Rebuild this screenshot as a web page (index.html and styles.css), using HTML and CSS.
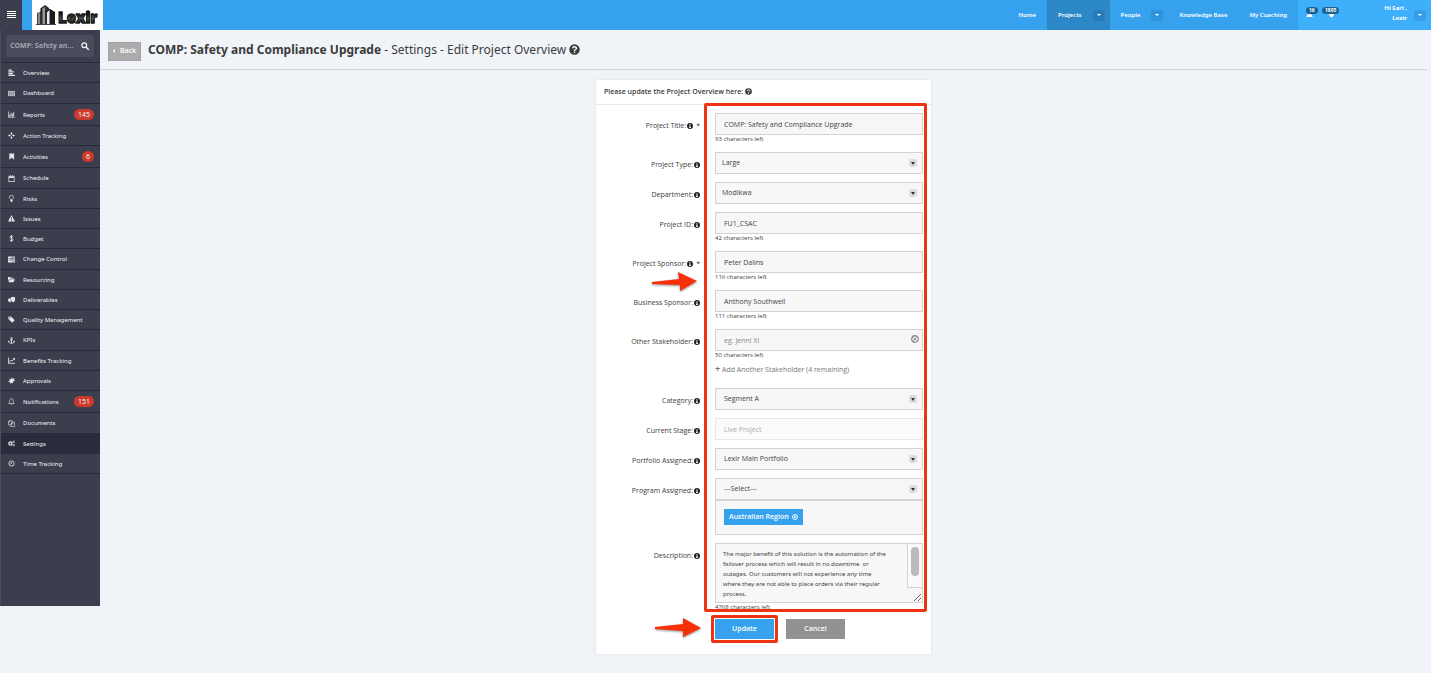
FILE: index.html
```html
<!DOCTYPE html>
<html lang="en">
<head>
<meta charset="utf-8">
<title>Edit Project Overview</title>
<link rel="stylesheet" href="styles.css">
</head>
<body>
<svg class="sprite" aria-hidden="true">
  <symbol id="search" viewBox="0 0 16 16"><circle cx="6.5" cy="6.5" r="4.8" fill="none" stroke="currentColor" stroke-width="2.4"/><path d="M10 10l5 5" stroke="currentColor" stroke-width="3" stroke-linecap="round"/></symbol>
  <symbol id="lines" viewBox="0 0 16 16"><path d="M1 1h8v3H1zM1 5h12v3H1zM1 9h10v3H1zM1 13h15v3H1z"/></symbol>
  <symbol id="board" viewBox="0 0 16 16"><path d="M0 2h16v12H0z" opacity=".75"/><path d="M2 5h12M2 8h12M2 11h12" stroke="#3b3e4d" stroke-dasharray="3 1.500"/></symbol>
  <symbol id="bars" viewBox="0 0 16 16"><path d="M0 1h1.500v12.500H16V15H0zM3 8h2v5H3zM6 4h2v9H6zM9 6h2v7H9zM12 2h2v11h-2z"/></symbol>
  <symbol id="cross" viewBox="0 0 16 16"><path d="M8 0l3 4H9v3h3V5l4 3-4 3V9H9v3h2l-3 4-3-4h2V9H4v2L0 8l4-3v2h3V4H5z" /><circle cx="8" cy="8" r="2" fill="#3b3e4d"/></symbol>
  <symbol id="bookmark" viewBox="0 0 16 16"><path d="M3 1h11v14.500L8.500 11 3 15.500z"/></symbol>
  <symbol id="calendar" viewBox="0 0 16 16"><path fill-rule="evenodd" d="M1 3h3V0h2v3h4V0h2v3h3v13H1zM2.500 7v7.500h11V7z"/></symbol>
  <symbol id="bulb" viewBox="0 0 16 16"><path d="M6 10.500C6 8.500 3.500 8 3.500 5a4.500 4.500 0 0 1 9 0c0 3-2.500 3.500-2.500 5.500z" fill="none" stroke="currentColor" stroke-width="1.600"/><path d="M5.500 11.500h5V15L8 16l-2.500-1z"/></symbol>
  <symbol id="warn" viewBox="0 0 16 16"><path fill-rule="evenodd" d="M8 0l8 15H0zM7 5l.4 5h1.200L9 5zM7 11.500v2h2v-2z"/></symbol>
  <symbol id="dollar" viewBox="0 0 16 16"><path d="M11.500 4.800C11 3.200 9.800 2.600 8 2.600c-4.500 0-4.500 4.500 0 5.200 5 .8 4.500 5.600 0 5.600-2.200 0-3.500-.9-3.800-2.600M8 0v16" fill="none" stroke="currentColor" stroke-width="2"/></symbol>
  <symbol id="stack" viewBox="0 0 16 16"><path fill-rule="evenodd" d="M0 1h16v4H0zM0 6h16v4H0zM0 11h16v4H0zM8 2.400v1.200h6.500V2.400zM4 7.400v1.200h10.500V7.400zM10 12.400v1.200h4.500v-1.200z"/></symbol>
  <symbol id="folder" viewBox="0 0 16 16"><path d="M0 12V2h5l1.500 2H12v2.500H4zM4.500 7.500H16L12.500 14H1z"/></symbol>
  <symbol id="truck" viewBox="0 0 16 16"><path d="M7 2h9v10H7zM3 5h3.500v7H0V8z"/><circle cx="4" cy="12.500" r="2"/><circle cx="12" cy="12.500" r="2"/></symbol>
  <symbol id="tag" viewBox="0 0 16 16"><path fill-rule="evenodd" d="M1 1h6l8.500 8.500-6 6L1 7zM4 2.800a1.200 1.200 0 1 0 .1 0z"/></symbol>
  <symbol id="anchor" viewBox="0 0 16 16"><g fill="none" stroke="currentColor" stroke-width="2"><circle cx="8" cy="2.800" r="1.800"/><path d="M8 5v9.500M4.500 7h7M1.500 10c.5 3 3 4.500 6.500 4.500s6-1.500 6.500-4.500"/></g><path d="M0 12l1-4 3.500 3zM16 12l-1-4-3.500 3z"/></symbol>
  <symbol id="trend" viewBox="0 0 16 16"><path d="M1 1v13.500h15M3 11l3.500-4 2.500 2.500L14 4" fill="none" stroke="currentColor" stroke-width="2"/><path d="M10.500 2H16v5.500z"/></symbol>
  <symbol id="pin" viewBox="0 0 16 16"><path d="M9 0l1 4 5-1-1 4 2 1-4 2-1 4-3-1-2 3-1-4-5-1 4-3-1-4 4 1z"/></symbol>
  <symbol id="bell" viewBox="0 0 16 16"><path d="M8 1.500C4.500 2 4 5 4 7.500S3 11 1.500 12.500h13C13 11 12 10 12 7.500S11.500 2 8 1.500zM8 0v2M6.500 14.500h3" fill="none" stroke="currentColor" stroke-width="1.500"/></symbol>
  <symbol id="copy" viewBox="0 0 16 16"><path d="M4 1h5v10H1V4zM4 1v3H1M9.500 5H15v10H6v-3M9.500 5v3H6" fill="none" stroke="currentColor" stroke-width="1.500"/></symbol>
  <symbol id="cogs" viewBox="0 0 16 16"><circle cx="5.500" cy="8" r="3.300" fill="none" stroke="currentColor" stroke-width="2.600"/><circle cx="5.500" cy="8" r="5" fill="none" stroke="currentColor" stroke-width="1.400" stroke-dasharray="2 1.930"/><circle cx="13" cy="4" r="1.800" fill="none" stroke="currentColor" stroke-width="1.800"/><circle cx="13" cy="12" r="1.800" fill="none" stroke="currentColor" stroke-width="1.800"/></symbol>
  <symbol id="clock" viewBox="0 0 16 16"><circle cx="8" cy="8" r="6" fill="none" stroke="currentColor" stroke-width="2"/><path d="M8 4.500v4H5" fill="none" stroke="currentColor" stroke-width="1.600"/></symbol>
  <symbol id="info" viewBox="0 0 16 16"><circle cx="8" cy="8" r="8"/><path d="M6.500 3h3v2h-3zM5.500 6.500h4v5h1V13h-5v-1.500h1V8h-1z" fill="#fff"/></symbol>
  <symbol id="help" viewBox="0 0 16 16"><circle cx="8" cy="8" r="7.600"/><path d="M5.200 6.200C5.500 4.500 6.500 4 8 4c3.300 0 3.600 3 1.500 4C8.400 8.600 8 9 8 10" fill="none" stroke="#fff" stroke-width="2"/><path d="M7 11h2v2H7z" fill="#fff"/></symbol>
  <symbol id="clear" viewBox="0 0 16 16"><circle cx="8" cy="8" r="6.500" fill="none" stroke="currentColor" stroke-width="2.600"/><path d="M5 5l6 6M11 5l-6 6" stroke="currentColor" stroke-width="2"/></symbol>
  <symbol id="user" viewBox="0 0 16 16"><circle cx="8" cy="4" r="3.500"/><path d="M1 15c0-5 3-7 7-7s7 2 7 7z"/></symbol>
  <symbol id="bubble" viewBox="0 0 16 16"><path d="M2 1h12v7c0 4-3 5-6 8-3-3-6-4-6-8z"/></symbol>
</svg>

<header class="topbar">
  <button class="menu-toggle" aria-label="Menu"><span></span><span></span><span></span><span></span></button>
  <a class="logo" href="#">
    <svg viewBox="0 0 22 22" aria-hidden="true">
      <defs><linearGradient id="steel" x1="0" x2="1"><stop offset="0" stop-color="#222"/><stop offset=".5" stop-color="#aaa"/><stop offset="1" stop-color="#222"/></linearGradient></defs>
      <path d="M1 9l4-2v13H1z" fill="url(#steel)"/><path d="M5 4l4-3 4 3v16H5z" fill="#2c2c2c"/><path d="M6.500 4.500L9 3v17H6.500z" fill="#999"/>
      <path d="M11 8l3-3v15h-3z" fill="#eee"/><path d="M14 5l5 3v12h-5z" fill="#1c1c1c"/><path d="M10.500 8.500L14 5v15M5 4v16" fill="none" stroke="#222"/><path d="M0 20.500h20" stroke="#444"/>
    </svg>
    <span>Lexir</span>
  </a>
  <nav class="main-nav">
    <a href="#">Home</a>
    <div class="split current"><a href="#">Projects</a><button class="drop" aria-label="Projects menu"></button></div>
    <div class="split"><a href="#">People</a><button class="drop" aria-label="People menu"></button></div>
    <a href="#">Knowledge Base</a>
    <a href="#">My Coaching</a>
  </nav>
  <div class="account">
    <a class="alert" href="#" aria-label="Team alerts"><svg><use href="#user"/></svg><span class="count">16</span></a>
    <a class="alert" href="#" aria-label="Messages"><svg><use href="#bubble"/></svg><span class="count">1895</span></a>
    <p class="hello">Hi Earl ,<br>Lexir</p>
    <button class="drop" aria-label="Account menu"></button>
  </div>
</header>

<div class="layout">
  <aside class="sidebar">
    <div class="finder"><input type="text" aria-label="Find project" placeholder="COMP: Safety an..."><button aria-label="Search"><svg><use href="#search"/></svg></button></div>
    <ul class="side-nav">
      <li><a href="#"><svg><use href="#lines"/></svg>Overview</a></li>
      <li><a href="#"><svg><use href="#board"/></svg>Dashboard</a></li>
      <li class="counted"><a href="#"><svg><use href="#bars"/></svg>Reports<span class="pill">145</span></a></li>
      <li><a href="#"><svg><use href="#cross"/></svg>Action Tracking</a></li>
      <li class="counted"><a href="#"><svg><use href="#bookmark"/></svg>Activities<span class="pill">6</span></a></li>
      <li><a href="#"><svg><use href="#calendar"/></svg>Schedule</a></li>
      <li><a href="#"><svg><use href="#bulb"/></svg>Risks</a></li>
      <li><a href="#"><svg><use href="#warn"/></svg>Issues</a></li>
      <li><a href="#"><svg><use href="#dollar"/></svg>Budget</a></li>
      <li><a href="#"><svg><use href="#stack"/></svg>Change Control</a></li>
      <li><a href="#"><svg><use href="#folder"/></svg>Resourcing</a></li>
      <li><a href="#"><svg><use href="#truck"/></svg>Deliverables</a></li>
      <li><a href="#"><svg><use href="#tag"/></svg>Quality Management</a></li>
      <li><a href="#"><svg><use href="#anchor"/></svg>KPIs</a></li>
      <li><a href="#"><svg><use href="#trend"/></svg>Benefits Tracking</a></li>
      <li><a href="#"><svg><use href="#pin"/></svg>Approvals</a></li>
      <li class="counted"><a href="#"><svg><use href="#bell"/></svg>Notifications<span class="pill">151</span></a></li>
      <li><a href="#"><svg><use href="#copy"/></svg>Documents</a></li>
      <li class="current"><a href="#"><svg><use href="#cogs"/></svg>Settings</a></li>
      <li><a href="#"><svg><use href="#clock"/></svg>Time Tracking</a></li>
    </ul>
  </aside>

  <main>
    <div class="page-head">
      <button class="back"><i></i>Back</button>
      <h1><b>COMP: Safety and Compliance Upgrade</b> - Settings - Edit Project Overview <svg><use href="#help"/></svg></h1>
    </div>

    <form class="card">
      <h2>Please update the Project Overview here: <svg><use href="#help"/></svg></h2>
      <div class="fields">
        <div class="row"><label for="title">Project Title: <svg><use href="#info"/></svg> <span class="req">*</span></label>
          <div><input class="control" id="title" type="text" value="COMP: Safety and Compliance Upgrade"><p class="left">93 characters left</p></div></div>
        <div class="row"><label for="type">Project Type: <svg><use href="#info"/></svg></label>
          <div class="pick"><select class="control tight" id="type"><option>Large</option></select></div></div>
        <div class="row"><label for="dept">Department: <svg><use href="#info"/></svg></label>
          <div class="pick"><select class="control tight" id="dept"><option>Modikwa</option></select></div></div>
        <div class="row"><label for="pid">Project ID: <svg><use href="#info"/></svg></label>
          <div><input class="control" id="pid" type="text" value="FU1_CSAC"><p class="left">42 characters left</p></div></div>
        <div class="row"><label for="sponsor">Project Sponsor: <svg><use href="#info"/></svg> <span class="req">*</span></label>
          <div><input class="control" id="sponsor" type="text" value="Peter Dalins"><p class="left">116 characters left</p></div>
          <svg class="arrow" viewBox="0 0 48 22"><path d="M1 11L28 8 27 1 46 10 29 20V14L1 13z"/></svg></div>
        <div class="row"><label for="business">Business Sponsor: <svg><use href="#info"/></svg></label>
          <div><input class="control" id="business" type="text" value="Anthony Southwell"><p class="left">111 characters left</p></div></div>
        <div class="row"><label for="other">Other Stakeholder: <svg><use href="#info"/></svg></label>
          <div class="clearable"><input class="control" id="other" type="text" placeholder="eg. Jenni Xi"><button type="button" class="clear" aria-label="Clear"><svg><use href="#clear"/></svg></button>
            <p class="left">50 characters left</p><a class="add" href="#"><b>+</b> Add Another Stakeholder (4 remaining)</a></div></div>
        <div class="row"><label for="category">Category: <svg><use href="#info"/></svg></label>
          <div class="pick"><select class="control" id="category"><option>Segment A</option></select></div></div>
        <div class="row"><label for="stage">Current Stage: <svg><use href="#info"/></svg></label>
          <div><input class="control" id="stage" type="text" value="Live Project" disabled></div></div>
        <div class="row"><label for="portfolio">Portfolio Assigned: <svg><use href="#info"/></svg></label>
          <div class="pick"><select class="control" id="portfolio"><option>Lexir Main Portfolio</option></select></div></div>
        <div class="row"><label for="program">Program Assigned: <svg><use href="#info"/></svg></label>
          <div class="pick"><select class="control" id="program"><option>---Select---</option></select>
            <div class="chosen"><button type="button" class="chip">Australian Region <svg><use href="#clear"/></svg></button></div></div></div>
        <div class="row"><label for="desc">Description: <svg><use href="#info"/></svg></label>
          <div><div class="scroller"><textarea class="control" id="desc">The major benefit of this solution is the automation of the
failover process which will result in no downtime  or
outages. Our customers will not experience any time
where they are not able to place orders via their regular
process.</textarea><div class="track"><span></span></div></div><p class="left">4768 characters left</p></div></div>
        <div class="mark"></div>
      </div>
      <div class="actions">
        <svg class="arrow" viewBox="0 0 48 22"><path d="M1 10L29 7V1L47 11 29 20V14L1 12z"/></svg>
        <div class="marked"><button type="submit" class="btn primary">Update</button></div>
        <button type="button" class="btn">Cancel</button>
      </div>
    </form>
  </main>
</div>
</body>
</html>
```
FILE: styles.css
```css
* { box-sizing: border-box; }
body {
  margin: 0;
  background: #f0f4f8;
  color: #3c3c3c;
  font: 7px/10px "Open Sans", "Noto Sans", sans-serif;
}
h1, h2, p, ul { margin: 0; padding: 0; }
a { color: inherit; text-decoration: none; }
button { margin: 0; padding: 0; border: 0; font: inherit; color: inherit; background: none; cursor: pointer; }
svg { fill: currentColor; }
.sprite { display: none; }

/* Top bar */
.topbar { display: flex; height: 30px; background: #36a2ee; color: #fff; font: 600 6px/10px "Noto Sans", sans-serif; }
.menu-toggle { display: flex; flex-direction: column; justify-content: center; align-items: center; gap: 1px; width: 22px; padding-bottom: 2px; background: #3b3e4d; }
.menu-toggle span { width: 9px; height: 1px; background: #fff; }
.logo { display: flex; align-items: center; width: 71px; margin-left: 10px; padding-left: 4px; background: #fff; }
.logo svg { flex: none; width: 22px; height: 22px; }
.logo span {
  padding-top: 4px;
  background: linear-gradient(#000 40%, #555 65%, #000 90%);
  background-clip: text;
  color: transparent;
  font: 800 15px/20px "Open Sans", sans-serif;
  -webkit-text-stroke: 1px #1a1a1a;
}
.main-nav { display: flex; align-items: center; margin-left: auto; }
.main-nav > a { padding: 0 11px; }
.split { display: flex; align-items: center; height: 100%; gap: 11px; padding: 0 5px 0 11px; }
.split.current { background: #2d88c8; }
.drop { display: grid; place-items: center; width: 12px; height: 11px; border-radius: 2px; background: rgb(0 40 80 / 12%); }
.drop::before { content: ""; border: 2px solid transparent; border-top-color: #fff; border-bottom: 0; }
.account { display: flex; align-items: center; width: 133px; padding: 0 5px 0 8px; background: #3eb0fb; }
.alert { position: relative; width: 22px; height: 10px; }
.alert svg { display: block; width: 7px; height: 8px; }
.count { position: absolute; left: 0; top: -3px; padding: 0 3px; border-radius: 4px; background: #1d618f; font: bold 5px/7px "Open Sans", sans-serif; }
.alert + .alert .count { left: -6px; }
.hello { margin-left: auto; margin-right: 7px; padding-bottom: 4px; text-align: right; font-weight: 700; }

/* Sidebar */
.layout { display: flex; align-items: flex-start; }
.sidebar { flex: none; width: 100px; min-height: calc(90vh - 30px); background: #3b3e4d; color: #f2f2f6; border-left: 1px solid #4a4d5e; }
.finder { display: flex; align-items: center; height: 22px; margin: 5px 6px 5px 5px; padding: 0 5px 0 4px; background: #4a4c5e; border-radius: 2px; }
.finder input { flex: 1; min-width: 0; padding: 0; border: 0; background: none; color: #fff; font: bold 7px/10px "Open Sans", sans-serif; }
.finder input::placeholder { color: #a3a4ae; }
.finder svg { display: block; width: 8px; height: 8px; }
.side-nav { list-style: none; border-top: 1px solid #292b38; font: 6px/10px "Noto Sans", sans-serif; }
.side-nav li { height: 20px; border-bottom: 1px solid #292b38; }
.side-nav li:nth-child(4n+2) { height: 21px; }
.side-nav li.counted { height: 22px; }
.side-nav li.current { background: #2a2c3b; }
.side-nav a { display: flex; align-items: center; height: 100%; padding: 0 6px 0 7px; }
.side-nav svg { width: 7px; height: 7px; margin-right: 8px; color: #e4e4ea; }
.pill { min-width: 11px; margin-left: auto; padding: 0 4px; border-radius: 6px; background: #cc3a2b; font-size: 7px; line-height: 11px; text-align: center; }

/* Page heading */
main { flex: 1; min-width: 0; padding-right: 4px; }
.page-head { display: flex; align-items: center; gap: 7px; height: 40px; padding-left: 8px; border-bottom: 1px solid #d0d6da; }
.back { display: flex; align-items: center; justify-content: center; gap: 5px; width: 33px; height: 19px; margin-top: 3px; background: #acacac; border: 1px solid #a2a2a2; color: #fff; font-weight: 600; }
.back i { border: 2px solid transparent; border-right-color: #fff; border-left: 0; }
h1 { font: 400 12px/20px "Noto Sans", sans-serif; }
h1 svg { width: 11px; height: 11px; vertical-align: -1px; }

/* Form card */
.card { width: 100%; max-width: 335px; margin: 10px auto 18px; padding-bottom: 11px; background: #fff; box-shadow: 0 0 2px #cfd8de; }
h2 { padding: 0 8px; border-bottom: 1px solid #e6e8ea; font-size: 7px; line-height: 24px; font-weight: 600; }
h2 svg { width: 7px; height: 7px; vertical-align: -1px; }
.fields { position: relative; display: grid; gap: 8px; padding: 8px 8px 0; }
.row { position: relative; display: grid; grid-template-columns: 6fr 13fr; gap: 15px; align-items: start; }
.row label { display: flex; justify-content: flex-end; align-items: center; gap: 1px; height: 22px; padding-top: 3px; white-space: nowrap; }
.row label svg { width: 6px; height: 6px; color: #222; }
.req { margin-left: 2px; }
.control { display: block; width: 100%; height: 22px; margin: 0; padding: 0 8px; border: 1px solid #d3d3d3; border-radius: 0; background: #f7f7f7; color: #444; font: 7px/10px "Open Sans", sans-serif; appearance: none; }
.control.tight { padding: 0 6px; }
.control::placeholder { color: #888; }
.control:disabled { border-color: #e8e8e8; background: #fbfbfb; color: #aaa; }
.pick, .clearable, .scroller { position: relative; }
.pick::before { content: ""; position: absolute; top: 7px; right: 6px; width: 8px; height: 8px; border-radius: 2px; background: #ddd; pointer-events: none; }
.pick::after { content: ""; position: absolute; top: 10px; right: 8px; border: 2px solid transparent; border-top: 3px solid #333; border-bottom: 0; pointer-events: none; }
.left { font-size: 6px; line-height: 9px; }
.clear { position: absolute; top: 6px; right: 4px; color: #8c8c8c; }
.clear svg { display: block; width: 8px; height: 8px; }
.add { display: block; line-height: 20px; color: #777; }
.add b { font-size: 9px; line-height: 10px; }
.chosen { height: 35px; padding: 8px; border: 1px solid #d3d3d3; background: #f7f7f7; }
.chip { display: flex; align-items: center; gap: 3px; height: 16px; padding: 0 5px; background: #36a2ee; color: #fff; font-weight: 600; }
.chip svg { width: 6px; height: 6px; }
textarea.control { height: 60px; padding: 5px 7px; font: 6px/10px "Noto Sans", sans-serif; resize: both; overflow: hidden; }
.track { position: absolute; top: 1px; right: 1px; width: 15px; height: 44px; padding: 3px; border-left: 1px solid #d3d3d3; border-bottom: 1px solid #d3d3d3; background: #fafafa; }
.track span { display: block; width: 8px; height: 29px; border-radius: 4px; background: #bbb; }

/* Callouts */
.mark { position: absolute; top: -2px; right: 4px; bottom: 0; left: 108px; border: 3px solid #ee3311; border-radius: 2px; pointer-events: none; }
.arrow { position: absolute; width: 48px; height: 22px; fill: #f8300a; filter: drop-shadow(0 1px 1px rgb(0 0 0 / 45%)); }
.row .arrow { left: 47px; top: 20px; }
.actions .arrow { left: 58px; top: 5px; }
.actions { position: relative; display: flex; gap: 8px; align-items: center; padding: 3px 8px 0 115px; }
.marked { padding: 1px; border: 3px solid #ee3311; border-radius: 2px; }
.btn { width: 59px; height: 20px; background: #929292; color: #fff; font-weight: 600; }
.btn.primary { display: block; background: #36a2ee; }
```
